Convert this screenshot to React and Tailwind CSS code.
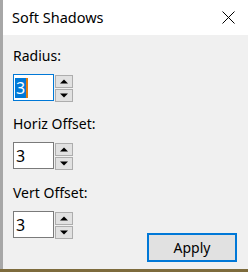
import { useState } from "react";

const FONT = { fontFamily: '"Noto Sans", "Open Sans", Arial, sans-serif' };

function Spinner() {
  return (
    <div className="ml-[1px] flex w-[18px] flex-col gap-[1px] pt-[1px]">
      <button className="flex h-[13px] items-center justify-center border border-[#adadad] bg-[#e1e1e1]">
        <svg width="8" height="5" viewBox="0 0 8 5">
          <path d="M0 4.5 L4 0.5 L8 4.5 Z" fill="#000" />
        </svg>
      </button>
      <button className="flex h-[13px] items-center justify-center border border-[#adadad] bg-[#e1e1e1]">
        <svg width="8" height="5" viewBox="0 0 8 5">
          <path d="M0 0.5 L4 4.5 L8 0.5 Z" fill="#000" />
        </svg>
      </button>
    </div>
  );
}

function NumberField({ value, focused }) {
  return (
    <div className="flex">
      <div
        className={
          "flex h-[27px] w-[41px] items-center bg-white px-[1px] " +
          (focused ? "border border-[#0078d7]" : "border border-[#7a7a7a]")
        }
      >
        {focused ? (
          <>
            <span className="flex h-[20px] items-center bg-[#0078d7] px-[1px] text-[16px] leading-none text-white">
              {value}
            </span>
            <span className="h-[20px] w-[2px] bg-[#e07a10]" />
          </>
        ) : (
          <span className="pl-[1px] text-[16px] leading-none text-black">{value}</span>
        )}
      </div>
      <Spinner />
    </div>
  );
}

export default function App() {
  const [radius] = useState("3");

  return (
    <div className="flex h-[272px] w-[248px] flex-col bg-[#7d6b3c]" style={FONT}>
      <div className="flex h-[269px]">
        <div className="w-[3px] bg-[#a7a7a7]" />
        <div className="flex flex-1 flex-col bg-[#f0f0f0]">
          <div className="flex h-[38px] items-center justify-between bg-white pl-[9px] pr-[13px]">
            <span className="text-[14.5px] text-black">Soft Shadows</span>
            <svg width="13" height="13" viewBox="0 0 13 13">
              <path d="M0.5 0.5 L12.5 12.5 M12.5 0.5 L0.5 12.5" stroke="#000" strokeWidth="1" />
            </svg>
          </div>

          <div className="flex flex-1 flex-col pl-[10px] pr-[11px] pt-[11px] text-[14px] text-[#000]">
            <div className="h-[20px] leading-[20px]">Radius:</div>
            <div className="mt-[8px]">
              <NumberField value={radius} focused />
            </div>

            <div className="mt-[12px] h-[20px] leading-[20px]">Horiz Offset:</div>
            <div className="mt-[8px]">
              <NumberField value="3" />
            </div>

            <div className="flex items-end justify-between">
              <div className="flex flex-col pb-[7px]">
                <div className="mt-[13px] h-[20px] leading-[20px]">Vert Offset:</div>
                <div className="mt-[8px] pb-[23px]">
                  <NumberField value="3" />
                </div>
              </div>
              <button className="mb-[7px] h-[29px] w-[90px] border-2 border-[#0078d7] bg-[#e1e1e1] text-[14px] text-black">
                Apply
              </button>
            </div>
          </div>
        </div>
      </div>
    </div>
  );
}
